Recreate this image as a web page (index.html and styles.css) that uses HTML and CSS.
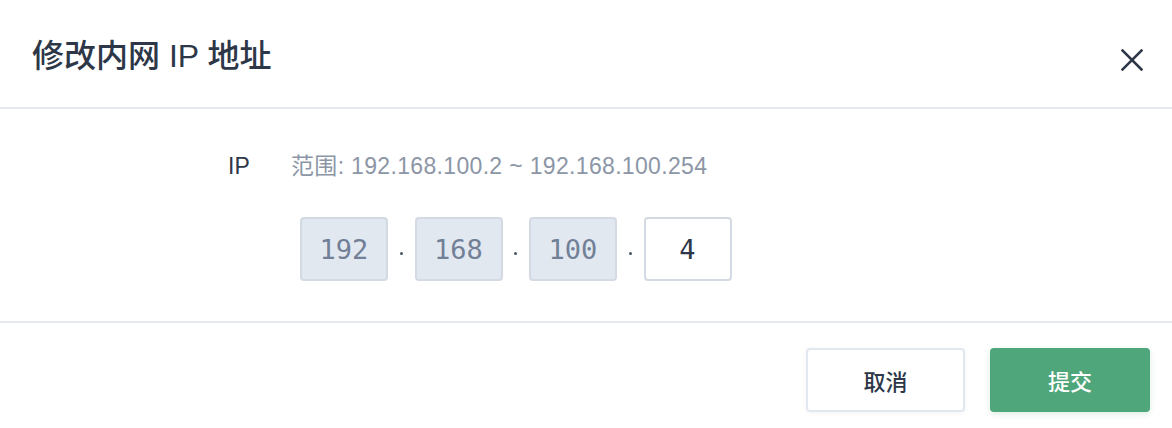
FILE: index.html
```html
<!DOCTYPE html>
<html lang="zh">
<head>
<meta charset="utf-8">
<link rel="stylesheet" href="styles.css">
</head>
<body>
<div class="modal">
  <div class="header">
    <h1 class="title">修改内网 IP 地址</h1>
    <button class="close" aria-label="关闭">
      <svg width="22" height="22" viewBox="0 0 22 22"><path d="M1.5 1.5L20.5 20.5M20.5 1.5L1.5 20.5" stroke="#2d3748" stroke-width="2.5" stroke-linecap="square"/></svg>
    </button>
  </div>
  <div class="body">
    <div class="field">
      <div class="label">IP</div>
      <div class="content">
        <div class="hint">范围: 192.168.100.2 ~ 192.168.100.254</div>
        <div class="ip-row">
          <div class="octet readonly">192</div>
          <span class="dot"></span>
          <div class="octet readonly">168</div>
          <span class="dot"></span>
          <div class="octet readonly">100</div>
          <span class="dot"></span>
          <div class="octet editable">4</div>
        </div>
      </div>
    </div>
  </div>
  <div class="footer">
    <button class="btn btn-cancel">取消</button>
    <button class="btn btn-submit">提交</button>
  </div>
</div>
</body>
</html>
```
FILE: styles.css
```css
* { box-sizing: border-box; }
html, body { margin: 0; padding: 0; background: #fff; }
body {
  font-family: "Liberation Sans", "Noto Sans CJK SC", sans-serif;
  color: #2d3748;
  width: 1172px;
  height: 428px;
  overflow: hidden;
}
.modal { display: flex; flex-direction: column; }
.header {
  height: 109px;
  border-bottom: 2px solid #e5e9ef;
  display: flex;
  align-items: center;
  justify-content: space-between;
  padding: 0 29px 2px 32px;
}
.title {
  margin: 0;
  font-size: 32px;
  font-weight: 500;
  letter-spacing: 0;
  color: #2d3748;
  font-family: "Liberation Sans", "Noto Sans CJK SC", sans-serif;
}
.close {
  border: 0;
  background: none;
  padding: 0;
  margin-top: 14px;
  width: 22px;
  height: 22px;
  display: flex;
}
.body {
  height: 214px;
  border-bottom: 2px solid #e5e9ef;
  padding-top: 42px;
}
.field { display: flex; }
.label {
  width: 291px;
  padding-left: 228px;
  font-size: 23px;
  font-weight: 500;
  line-height: 30px;
  color: #2d3748;
}
.content { display: flex; flex-direction: column; }
.hint {
  font-size: 23px;
  line-height: 30px;
  color: #8c96a6;
  letter-spacing: 0.33px;
}
.ip-row {
  display: flex;
  align-items: center;
  margin-top: 36px;
  margin-left: 9px;
}
.octet {
  width: 88px;
  height: 64px;
  border: 2px solid #d3dae3;
  border-radius: 4px;
  display: flex;
  align-items: center;
  justify-content: center;
  font-family: "DejaVu Sans Mono", monospace;
  font-size: 27px;
}
.readonly { background: #e2e8f0; color: #718096; }
.editable { background: #fff; color: #2d3748; }
.dot {
  width: 26.5px;
  display: flex;
  justify-content: center;
  align-self: center;
  margin-top: 8px;
}
.dot::before {
  content: "";
  width: 3px;
  height: 3px;
  border-radius: 50%;
  background: #4a5568;
}
.footer {
  display: flex;
  justify-content: flex-end;
  gap: 25px;
  padding: 25px 22px 0 0;
}
.btn {
  width: 160px;
  height: 64px;
  border-radius: 4px;
  font-family: "Noto Sans CJK SC", sans-serif;
  font-size: 22px;
  font-weight: 500;
  cursor: pointer;
}
.btn-cancel {
  width: 159px;
  background: #fff;
  border: 2px solid #e2e8f0;
  color: #2d3748;
  box-shadow: 0 1px 4px rgba(0,0,0,0.05);
}
.btn-submit {
  background: #4fa67a;
  border: 0;
  color: #fff;
  box-shadow: 0 2px 6px rgba(79,166,122,0.2);
}
```
